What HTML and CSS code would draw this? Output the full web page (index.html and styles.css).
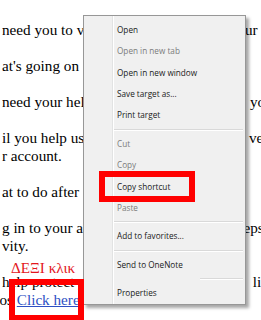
FILE: index.html
```html
<!DOCTYPE html>
<html>
<head>
<meta charset="utf-8">
<link rel="stylesheet" href="styles.css">
</head>
<body>
<div class="doc">
  <p><span class="ln"><span class="l">need you to verify your</span><span class="r">ur account</span></span></p>
  <p>at's going on</p>
  <p><span class="ln"><span class="l">need your help to</span><span class="r r-y">you</span></span></p>
  <p><span class="ln"><span class="l">il you help us verify</span><span class="r r-v">ve</span></span>r account.</p>
  <p>at to do after</p>
  <p><span class="ln"><span class="l">g in to your account and</span><span class="r r-e">eps</span></span>vity.</p>
  <p><span class="ln"><span class="l">help protect your account</span><span class="r r-v">&nbsp;li</span></span><span class="tail">os <a class="link" href="#">Click here</a></span></p>
</div>

<div class="note">ΔΕΞΙ κλικ</div>

<div class="menu">
  <div class="item">Open</div>
  <div class="item off">Open in new tab</div>
  <div class="item">Open in new window</div>
  <div class="item">Save target as...</div>
  <div class="item">Print target</div>
  <div class="sep"></div>
  <div class="item off">Cut</div>
  <div class="item off">Copy</div>
  <div class="item">Copy shortcut</div>
  <div class="item off">Paste</div>
  <div class="sep"></div>
  <div class="item">Add to favorites...</div>
  <div class="sep"></div>
  <div class="item">Send to OneNote</div>
  <div class="sep partial"></div>
  <div class="item">Properties</div>
</div>

<div class="mark mark-copy"></div>
<div class="mark mark-link"></div>
</body>
</html>
```
FILE: styles.css
```css
html, body {
  margin: 0;
  padding: 0;
  width: 261px;
  height: 320px;
  overflow: hidden;
  background: #fff;
}

.doc {
  padding: 3px 0 0 2px;
  font-family: "Liberation Serif", "Times New Roman", serif;
  font-size: 15.2px;
  line-height: 18px;
  color: #000;
  white-space: nowrap;
}

.doc p {
  margin: 18px 0;
}

.ln {
  display: flex;
}

.l {
  flex: 0 0 243px;
  overflow: hidden;
}

.r-y { margin-left: 5px; }
.r-v { margin-left: 4px; }
.r-e { margin-left: -1.5px; }

.tail {
  display: block;
  margin-left: -2.5px;
}

.link {
  color: #2e4fc4;
  text-decoration: underline;
}

.note {
  position: absolute;
  left: 11px;
  top: 259px;
  font-family: "Liberation Serif", "Times New Roman", serif;
  font-size: 15.2px;
  line-height: 18px;
  color: #e3161d;
}

.menu {
  position: absolute;
  left: 83px;
  top: 15px;
  width: 161px;
  padding: 2.8px 0 1px 0;
  border: 1px solid #979797;
  background:
    linear-gradient(to right, transparent 28px, #e2e3e3 28px, #e2e3e3 29px, #fff 29px, #fff 30px, transparent 30px),
    #f0f0f0;
  box-shadow: 3px 3px 3px rgba(0, 0, 0, 0.35);
  font-family: "Open Sans", "Noto Sans", sans-serif;
  font-size: 8.2px;
}

.item {
  height: 21.4px;
  line-height: 21.4px;
  padding-left: 33px;
  color: #1a1a1a;
  white-space: nowrap;
}

.item.off {
  color: #7b7b7b;
}

.sep {
  height: 1px;
  margin: 3px 2px 3px 30px;
  background: #d9d9d9;
  box-shadow: 0 1px 0 #fff;
}

.sep.partial {
  margin-left: 116px;
}

.mark {
  position: absolute;
  border: 6px solid #ff0000;
}

.mark-copy {
  left: 99px;
  top: 171px;
  width: 84px;
  height: 19px;
}

.mark-link {
  left: 9px;
  top: 279px;
  width: 63px;
  height: 30px;
}
```
